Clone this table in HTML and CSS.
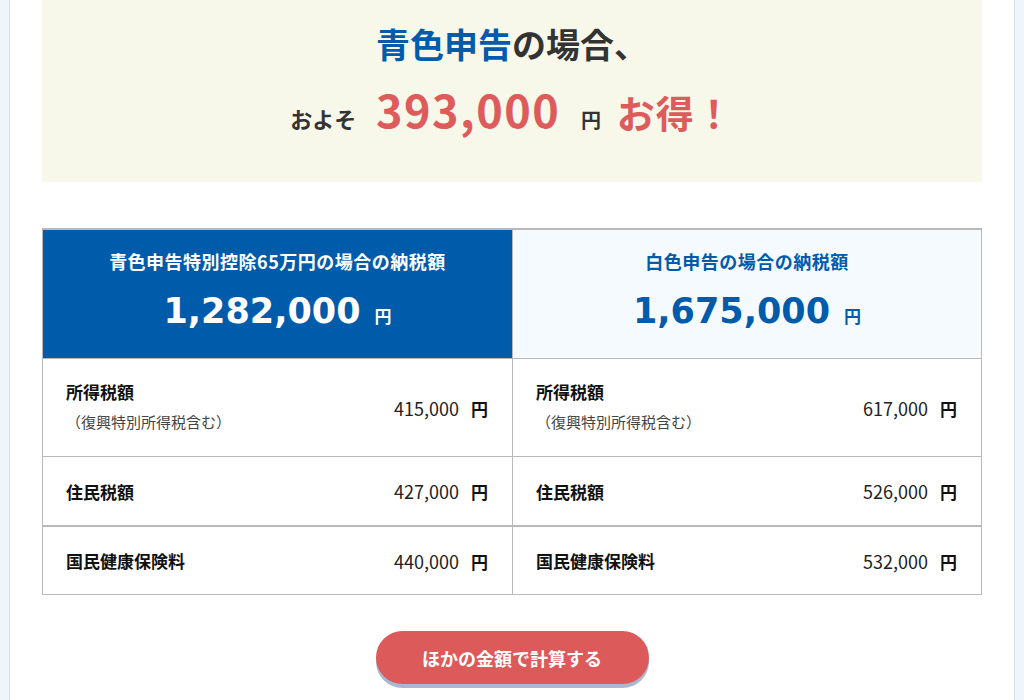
FILE: index.html
```html
<!DOCTYPE html>
<html lang="ja">
<head>
    <meta charset="UTF-8">
    <meta name="viewport" content="width=device-width, initial-scale=1.0">
    <title>青色申告シミュレーション結果</title>
    <link rel="stylesheet" href="styles.css">
</head>
<body>

<div class="card">
    <div class="result">
        <p class="result-title"><span class="blue">青色申告</span>の場合、</p>
        <p class="result-amount">
            <span class="approx">およそ</span>
            <span class="saving">393,000</span>
            <span class="yen">円</span>
            <span class="otoku">お得！</span>
        </p>
    </div>

    <div class="compare">
        <div class="head head-blue">
            <p class="head-label">青色申告特別控除65万円の場合の納税額</p>
            <p class="head-total">1,282,000<span class="head-yen">円</span></p>
        </div>
        <div class="head head-white">
            <p class="head-label">白色申告の場合の納税額</p>
            <p class="head-total">1,675,000<span class="head-yen">円</span></p>
        </div>

        <div class="cell row-tall">
            <div class="item">
                <p class="item-name">所得税額</p>
                <p class="item-note">（復興特別所得税含む）</p>
            </div>
            <p class="item-value">415,000<span class="item-yen">円</span></p>
        </div>
        <div class="cell row-tall">
            <div class="item">
                <p class="item-name">所得税額</p>
                <p class="item-note">（復興特別所得税含む）</p>
            </div>
            <p class="item-value">617,000<span class="item-yen">円</span></p>
        </div>

        <div class="cell">
            <p class="item-name">住民税額</p>
            <p class="item-value">427,000<span class="item-yen">円</span></p>
        </div>
        <div class="cell">
            <p class="item-name">住民税額</p>
            <p class="item-value">526,000<span class="item-yen">円</span></p>
        </div>

        <div class="cell last">
            <p class="item-name">国民健康保険料</p>
            <p class="item-value">440,000<span class="item-yen">円</span></p>
        </div>
        <div class="cell last">
            <p class="item-name">国民健康保険料</p>
            <p class="item-value">532,000<span class="item-yen">円</span></p>
        </div>
    </div>

    <div class="actions">
        <button type="button" class="retry">ほかの金額で計算する</button>
    </div>
</div>

</body>
</html>
```

FILE: styles.css
```css
body {
    margin: 0;
    background-color: #eef5fb;
    font-family: "Noto Sans CJK JP", "Noto Sans", sans-serif;
    color: #222;
}

p {
    margin: 0;
}

.card {
    width: 1006px;
    margin: 0 auto;
    box-sizing: border-box;
    padding: 0 32px 40px;
    background-color: #fff;
    border-left: 1px solid #d6dde5;
    border-right: 1px solid #d6dde5;
}

.result {
    background-color: #f7f7ea;
    height: 182px;
    box-sizing: border-box;
    padding-top: 19px;
    text-align: center;
}

.result-title {
    font-size: 34px;
    font-weight: bold;
    line-height: 50px;
    color: #333;
}

.blue {
    color: #005bab;
}

.result-amount {
    margin-top: 12px;
    font-weight: bold;
    line-height: 56px;
    color: #333;
}

.approx {
    font-size: 22px;
}

.saving {
    font-size: 45px;
    color: #de5b5b;
    letter-spacing: 1.5px;
    margin: 0 17px 0 16px;
}

.yen {
    font-size: 20px;
    margin-right: 12px;
}

.otoku {
    font-size: 38px;
    color: #de5b5b;
    letter-spacing: 1px;
}

.compare {
    margin-top: 46px;
    display: grid;
    grid-template-columns: 1fr 1fr;
    border: 1px solid #b9b9b9;
    border-top-width: 2px;
}

.head {
    height: 128px;
    box-sizing: border-box;
    padding-top: 16px;
    text-align: center;
}

.head-blue {
    background-color: #005bab;
    color: #fff;
}

.head-white {
    background-color: #f5fafe;
    color: #005bab;
    border-left: 1px solid #b9b9b9;
}

.head-label {
    font-size: 18px;
    font-weight: bold;
    line-height: 30px;
    letter-spacing: 0.5px;
}

.head-total {
    margin-top: 13px;
    font-family: "DejaVu Sans", Verdana, sans-serif;
    font-size: 35px;
    font-weight: bold;
    line-height: 44px;
}

.head-yen {
    font-family: "Noto Sans CJK JP", sans-serif;
    font-size: 17px;
    margin-left: 14px;
}

.cell {
    display: flex;
    align-items: center;
    justify-content: space-between;
    height: 69px;
    box-sizing: border-box;
    padding: 0 24px 0 23px;
    border-top: 1px solid #b9b9b9;
}

.cell:nth-child(even) {
    border-left: 1px solid #b9b9b9;
}

.cell.last {
    border-top-width: 2px;
}

.cell.row-tall {
    height: 98px;
}

.item {
    padding-bottom: 4px;
}

.item-name {
    font-size: 17px;
    font-weight: bold;
    color: #111;
}

.item-note {
    margin-top: 7px;
    font-size: 15px;
    color: #444;
}

.item-value {
    font-size: 18px;
    color: #222;
}

.item-yen {
    font-size: 17px;
    font-weight: bold;
    margin-left: 12px;
    color: #111;
}

.actions {
    margin-top: 36px;
    text-align: center;
}

.retry {
    width: 273px;
    height: 53px;
    border: none;
    border-radius: 27px;
    background-color: #dc5a5a;
    color: #fff;
    font-family: "Noto Sans CJK JP", sans-serif;
    font-size: 18px;
    font-weight: bold;
    box-shadow: 0 4px 0 #aab7d1;
    cursor: pointer;
}

.retry:hover {
    background-color: #e46868;
}
```
